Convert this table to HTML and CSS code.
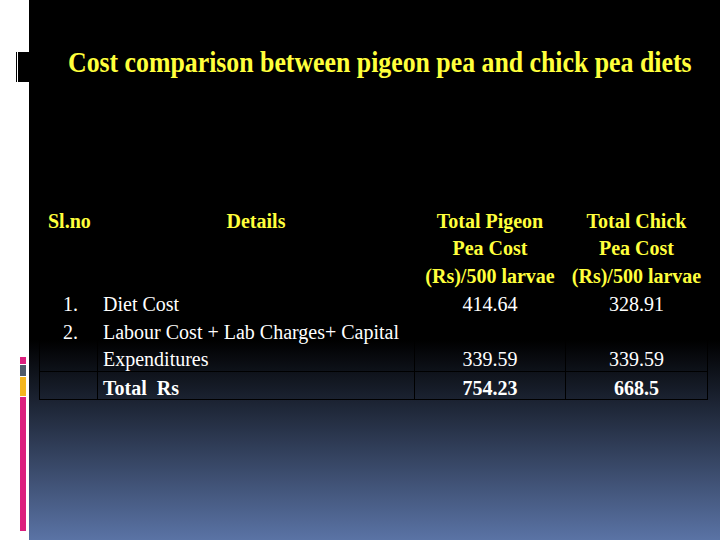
FILE: index.html
```html
<!DOCTYPE html>
<html>
<head>
<meta charset="utf-8">
<link rel="stylesheet" href="styles.css">
</head>
<body>
<div class="strip">
  <div class="tab"></div>
  <div class="bars">
    <div class="bar pink-s"></div>
    <div class="bar gray"></div>
    <div class="bar yellow"></div>
    <div class="bar pink-l"></div>
  </div>
</div>
<div class="slide">
  <h1 class="title">Cost comparison between pigeon pea and chick pea diets</h1>
  <table class="cost">
    <colgroup>
      <col class="c1"><col class="c2"><col class="c3"><col class="c4">
    </colgroup>
    <tr class="head">
      <th class="sl"><div class="in">Sl.no</div></th>
      <th class="det"><div class="in">Details</div></th>
      <th><div class="in">Total Pigeon<br>Pea Cost<br>(Rs)/500 larvae</div></th>
      <th><div class="in">Total Chick<br>Pea Cost<br>(Rs)/500 larvae</div></th>
    </tr>
    <tr>
      <td class="num"><div class="in">1.</div></td>
      <td class="txt"><div class="in">Diet Cost</div></td>
      <td class="val"><div class="in">414.64</div></td>
      <td class="val"><div class="in">328.91</div></td>
    </tr>
    <tr>
      <td class="num"><div class="in">2.</div></td>
      <td class="txt"><div class="in">Labour Cost + Lab Charges+ Capital Expenditures</div></td>
      <td class="val bottom"><div class="in">339.59</div></td>
      <td class="val bottom"><div class="in">339.59</div></td>
    </tr>
    <tr class="total">
      <td class="num"></td>
      <td class="txt"><div class="in">Total&nbsp; Rs</div></td>
      <td class="val"><div class="in">754.23</div></td>
      <td class="val"><div class="in">668.5</div></td>
    </tr>
  </table>
</div>
</body>
</html>
```
FILE: styles.css
```css
html, body {
  margin: 0;
  padding: 0;
}
body {
  width: 720px;
  height: 540px;
  display: flex;
  background: #ffffff;
  overflow: hidden;
  font-family: "Liberation Serif", "Times New Roman", serif;
}
.strip {
  width: 29px;
  flex: none;
  display: flex;
  flex-direction: column;
  align-items: flex-end;
}
.tab {
  margin-top: 52px;
  width: 13px;
  height: 30px;
  background: linear-gradient(to right, #000 0, #000 1px, #fff 1px, #fff 2px, #000 2px);
}
.bars {
  margin-top: 275px;
  margin-right: 3px;
  width: 6px;
  display: flex;
  flex-direction: column;
  gap: 1px;
}
.bar { width: 6px; }
.pink-s { height: 7px; background: #dc1f7e; }
.gray { height: 11px; background: #4f5a69; }
.yellow { height: 19px; background: #f4b61e; }
.pink-l { height: 134px; background: #dc1f7e; }

.slide {
  flex: 1;
  height: 540px;
  overflow: hidden;
  background: linear-gradient(to bottom, #000 0%, #000 63%, #5a73a5 100%);
  display: flex;
  flex-direction: column;
}
.title {
  margin: 45px 0 0 39px;
  font-size: 30px;
  line-height: 34px;
  font-weight: bold;
  color: #ffff3c;
  white-space: nowrap;
  transform: scaleX(0.86);
  transform-origin: left center;
}
.cost {
  margin: 125px 0 0 10px;
  width: 668px;
  border-collapse: collapse;
  table-layout: fixed;
  font-size: 20px;
  line-height: 27.3px;
  color: #fff;
}
.c1 { width: 58px; }
.c2 { width: 317px; }
.c3 { width: 151px; }
.c4 { width: 142px; }
.cost th, .cost td {
  border: 1px solid #000;
  padding: 0;
  vertical-align: top;
}
.in {
  margin: 3px 0 -3px;
}
.cost th {
  color: #ffff3c;
  font-weight: bold;
  text-align: center;
}
.cost th.sl { text-align: left; padding-left: 8px; }
.num { text-align: center; padding-left: 4px !important; }
.txt { text-align: left; padding-left: 5px !important; }
.val { text-align: center; }
.cost td.bottom { vertical-align: bottom; }
.total td { font-weight: bold; }
```
